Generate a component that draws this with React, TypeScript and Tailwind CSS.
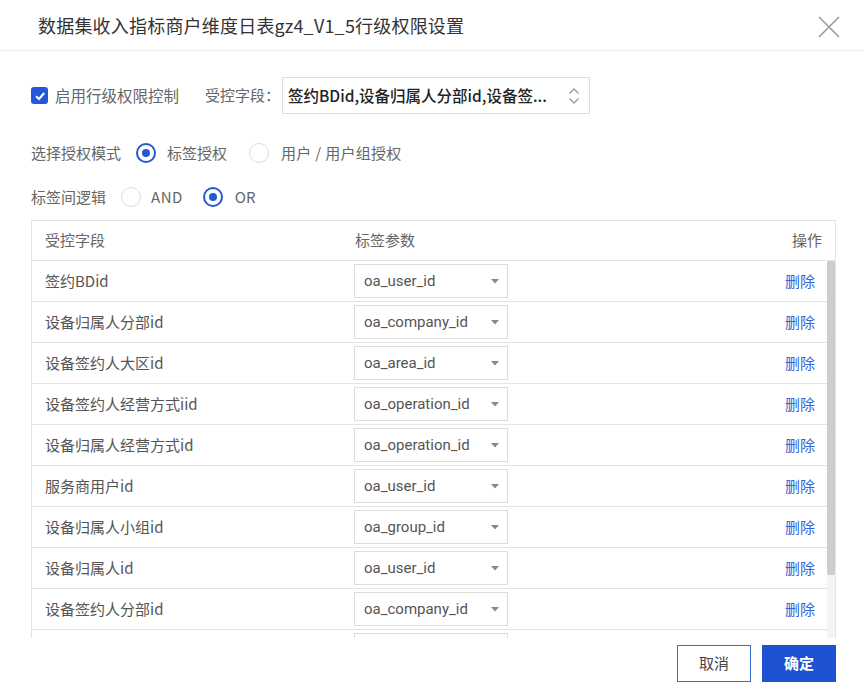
import React from "react";

const rows = [
  { field: "签约BDid", param: "oa_user_id" },
  { field: "设备归属人分部id", param: "oa_company_id" },
  { field: "设备签约人大区id", param: "oa_area_id" },
  { field: "设备签约人经营方式iid", param: "oa_operation_id" },
  { field: "设备归属人经营方式id", param: "oa_operation_id" },
  { field: "服务商用户id", param: "oa_user_id" },
  { field: "设备归属人小组id", param: "oa_group_id" },
  { field: "设备归属人id", param: "oa_user_id" },
  { field: "设备签约人分部id", param: "oa_company_id" },
  // partly scrolled out of view
  { field: "", param: "" },
];

function Radio({ checked }: { checked: boolean }) {
  return (
    <span
      className={
        checked
          ? "flex h-[20px] w-[20px] items-center justify-center rounded-full border-2 border-[#2458d6] bg-white"
          : "flex h-[20px] w-[20px] items-center justify-center rounded-full border border-[#dcdcdc] bg-white"
      }
    >
      {checked && <span className="h-[8px] w-[8px] rounded-full bg-[#2458d6]" />}
    </span>
  );
}

export default function App() {
  return (
    <div
      className="flex h-[697px] w-[864px] flex-col overflow-hidden bg-white text-[15px] text-[#666]"
      style={{ fontFamily: '"Noto Sans CJK SC", Roboto, sans-serif' }}
    >
      {/* header */}
      <div className="flex h-[51px] shrink-0 items-center justify-between border-b border-[#ececec] pl-[38px] pr-[24px]">
        <span className="text-[18px] tracking-[0.2px] text-[#333]">数据集收入指标商户维度日表gz4_V1_5行级权限设置</span>
        <svg width="22" height="22" viewBox="0 0 22 22" className="mt-[4px]">
          <path d="M1 1 L21 21 M21 1 L1 21" stroke="#9a9a9a" strokeWidth="1.6" fill="none" />
        </svg>
      </div>

      <div className="flex flex-1 flex-col pl-[31px] pr-[28px]">
        {/* row 1 */}
        <div className="mt-[26px] flex h-[37px] items-center">
          <span className="flex h-[17px] w-[17px] items-center justify-center rounded-[3px] bg-[#2458d6]">
            <svg width="12" height="12" viewBox="0 0 12 12">
              <path d="M2 6.2 L5 9 L10.2 3" stroke="#fff" strokeWidth="2" fill="none" />
            </svg>
          </span>
          <span className="ml-[7px] text-[15.5px]">启用行级权限控制</span>
          <span className="ml-[26px] text-[15px]">受控字段：</span>
          <div className="ml-[2px] flex h-[37px] w-[308px] items-center justify-between border border-[#dcdcdc] pl-[5px] pr-[9px]">
            <span className="text-[15.5px] font-medium text-[#222]">签约BDid,设备归属人分部id,设备签...</span>
            <svg width="12" height="18" viewBox="0 0 12 18">
              <path d="M1.5 6.5 L6 2 L10.5 6.5 M1.5 11.5 L6 16 L10.5 11.5" stroke="#9a9a9a" strokeWidth="1.3" fill="none" />
            </svg>
          </div>
        </div>

        {/* row 2 */}
        <div className="mt-[24px] flex h-[30px] items-center">
          <span>选择授权模式</span>
          <span className="ml-[15px]">
            <Radio checked />
          </span>
          <span className="ml-[11px]">标签授权</span>
          <span className="ml-[22px]">
            <Radio checked={false} />
          </span>
          <span className="ml-[12px] tracking-[0.3px]">用户 / 用户组授权</span>
        </div>

        {/* row 3 */}
        <div className="mt-[14px] flex h-[30px] items-center">
          <span>标签间逻辑</span>
          <span className="ml-[15px]">
            <Radio checked={false} />
          </span>
          <span className="ml-[10px] tracking-[0.5px]">AND</span>
          <span className="ml-[20px]">
            <Radio checked />
          </span>
          <span className="ml-[12px]">OR</span>
        </div>

        {/* table */}
        <div className="mt-[8px] flex h-[418px] flex-col border border-[#e4e4e4] border-b-0">
          <div className="flex h-[40px] shrink-0 items-center border-b border-[#e4e4e4] pl-[13px] pr-[13px]">
            <span className="w-[310px]">受控字段</span>
            <span className="flex-1">标签参数</span>
            <span>操作</span>
          </div>
          <div className="flex min-h-0 flex-1">
            <div className="flex min-w-0 flex-1 flex-col overflow-hidden">
              {rows.map((r, i) => (
                <div key={i} className="flex h-[41px] shrink-0 items-center border-b border-[#e4e4e4] pl-[13px] pr-[12px] text-[#555]">
                  <span className="w-[309px]">{r.field}</span>
                  <div className="flex h-[34px] w-[154px] items-center justify-between border border-[#dcdcdc] pl-[9px] pr-[8px]">
                    <span style={{ fontFamily: 'Roboto, "Noto Sans CJK SC", sans-serif' }}>{r.param}</span>
                    <svg width="8" height="5" viewBox="0 0 8 5">
                      <path d="M0 0 L8 0 L4 4.5 Z" fill="#888" />
                    </svg>
                  </div>
                  {r.field && <span className="ml-auto text-[#3565d8]">删除</span>}
                </div>
              ))}
            </div>
            <div className="w-[8px] shrink-0 bg-[#f4f4f4]">
              <div className="h-[314px] w-full rounded-[2px] bg-[#cdcdcd]" />
            </div>
          </div>
        </div>

        {/* footer */}
        <div className="mt-[7px] flex justify-end gap-[11px]">
          <button className="h-[37px] w-[74px] border border-[#3a6ad8] bg-white text-[15px] text-[#444]">取消</button>
          <button className="h-[37px] w-[74px] bg-[#1f51d3] text-[15px] font-bold text-white">确定</button>
        </div>
      </div>
    </div>
  );
}
